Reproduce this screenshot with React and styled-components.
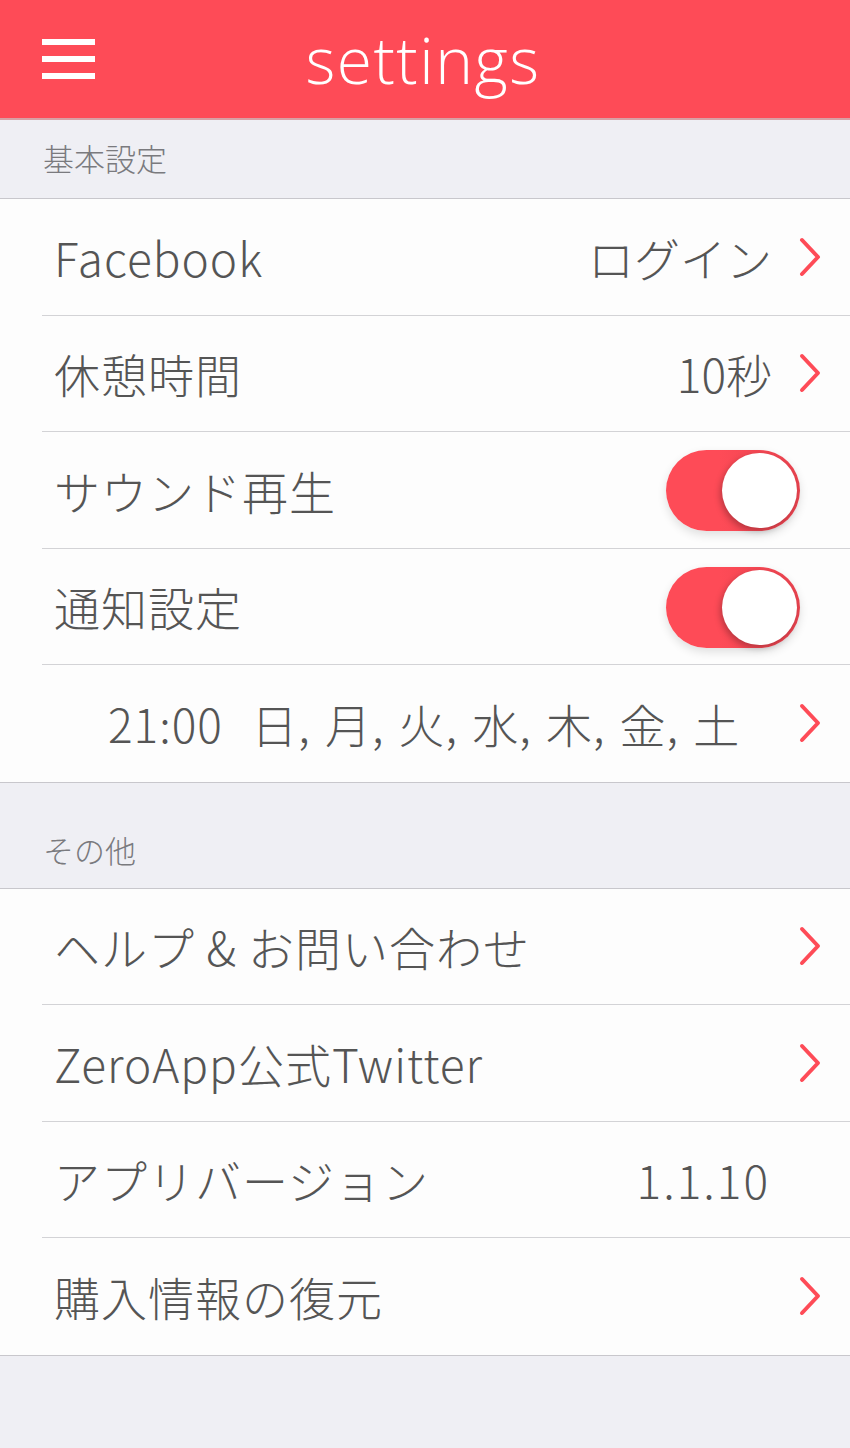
import styled, { createGlobalStyle } from "styled-components";

const GlobalStyle = createGlobalStyle`
  html, body {
    margin: 0;
    padding: 0;
    background: #efeff4;
  }
  body {
    font-family: "Noto Sans CJK JP", "Noto Sans", sans-serif;
  }
`;

const RED = "#fe4b57";

function Chevron() {
  return (
    <svg width="24" height="40" viewBox="0 0 24 40">
      <path d="M4 3 L20 20 L4 37" fill="none" stroke={RED} strokeWidth="4" strokeLinecap="round" strokeLinejoin="round" />
    </svg>
  );
}

function Toggle() {
  return (
    <ToggleTrack>
      <ToggleKnob />
    </ToggleTrack>
  );
}

export default function App() {
  return (
    <Page>
      <GlobalStyle />
      <Header>
        <Burger>
          <span />
          <span />
          <span />
        </Burger>
        <Title>settings</Title>
      </Header>

      <SectionLabel>基本設定</SectionLabel>
      <Group>
        <Row>
          <Label>Facebook</Label>
          <Value>ログイン</Value>
          <Chevron />
        </Row>
        <Row>
          <Label>休憩時間</Label>
          <Value>10秒</Value>
          <Chevron />
        </Row>
        <Row>
          <Label>サウンド再生</Label>
          <Toggle />
        </Row>
        <Row>
          <Label>通知設定</Label>
          <Toggle />
        </Row>
        <Row last>
          <Schedule>21:00&nbsp;&nbsp;日, 月, 火, 水, 木, 金, 土</Schedule>
          <Chevron />
        </Row>
      </Group>

      <SectionLabel tall>その他</SectionLabel>
      <Group>
        <Row>
          <Label>ヘルプ &amp; お問い合わせ</Label>
          <Chevron />
        </Row>
        <Row>
          <Label>ZeroApp公式Twitter</Label>
          <Chevron />
        </Row>
        <Row>
          <Label>アプリバージョン</Label>
          <Value plain>1.1.10</Value>
        </Row>
        <Row last>
          <Label>購入情報の復元</Label>
          <Chevron />
        </Row>
      </Group>
    </Page>
  );
}

const Page = styled.div`
  width: 850px;
  min-height: 1448px;
  background: #efeff4;
`;

const Header = styled.header`
  height: 118px;
  background: ${RED};
  border-bottom: 2px solid #d8a0a4;
  display: flex;
  align-items: center;
  justify-content: center;
  position: relative;
`;

const Burger = styled.div`
  position: absolute;
  left: 42px;
  top: 39px;
  width: 53px;
  display: flex;
  flex-direction: column;
  gap: 11px;

  span {
    display: block;
    height: 6px;
    background: #fff;
  }
`;

const Title = styled.h1`
  margin: 0 0 0 -4px;
  font-family: "Open Sans", "Noto Sans", sans-serif;
  font-weight: 300;
  font-size: 64px;
  color: #fff;
  letter-spacing: 1.5px;
  line-height: 1;
  padding-top: 2px;
`;

const SectionLabel = styled.div`
  height: ${(p) => (p.tall ? "106px" : "79px")};
  box-sizing: border-box;
  display: flex;
  align-items: flex-end;
  padding: 0 0 ${(p) => (p.tall ? "16px" : "18px")} 43px;
  font-size: 31px;
  color: #7a7a7e;
  font-weight: 300;
  border-bottom: 1px solid #c8c7cc;
`;

const Group = styled.div`
  background: #fdfdfd;
  border-bottom: 1px solid #c8c7cc;
`;

const Row = styled.div`
  height: 116.5px;
  margin-left: 42px;
  padding-right: 28px;
  box-sizing: border-box;
  display: flex;
  align-items: center;
  gap: 26px;
  border-bottom: ${(p) => (p.last ? "none" : "1px solid #d3d3d6")};
`;

const Text = styled.div`
  font-size: 46px;
  color: #555;
  font-weight: 300;
  letter-spacing: 1px;
  white-space: nowrap;
`;

const Label = styled(Text)`
  flex: 1;
  padding-left: 12px;
`;

const Value = styled(Text)`
  letter-spacing: ${(p) => (p.plain ? "2px" : "0")};
  margin-right: ${(p) => (p.plain ? "52px" : "0")};
`;

const Schedule = styled(Text)`
  flex: 1;
  padding-left: 66px;
  letter-spacing: 1px;
  word-spacing: 3px;
`;

const ToggleTrack = styled.div`
  width: 134px;
  height: 81px;
  border-radius: 41px;
  background: linear-gradient(90deg, #fe4b57 40%, #e8434f 100%);
  position: relative;
  margin-right: 22px;
  margin-top: 2px;
  box-shadow: 0 4px 10px rgba(0, 0, 0, 0.12);
`;

const ToggleKnob = styled.div`
  position: absolute;
  right: 3px;
  top: 3px;
  width: 75px;
  height: 75px;
  border-radius: 50%;
  background: #fff;
  box-shadow: -2px 3px 6px rgba(0, 0, 0, 0.25);
`;
